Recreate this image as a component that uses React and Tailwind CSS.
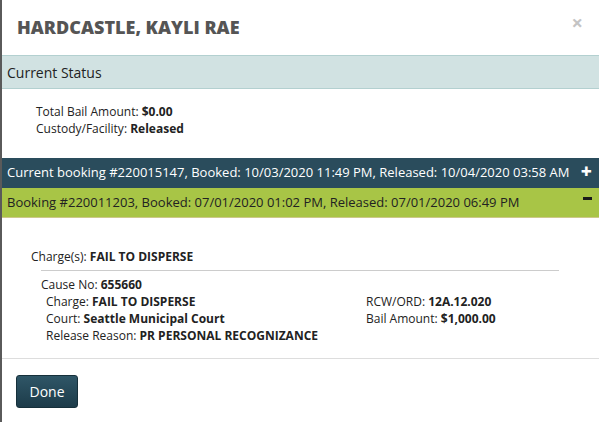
import React from 'react'

function Field({ label, value }) {
  return (
    <div>
      {label}: <span className="font-bold">{value}</span>
    </div>
  )
}

export default function App() {
  return (
    <div
      className="w-[599px] h-[422px] bg-white border-l-2 border-[#5a5a5a] overflow-hidden text-[#222]"
      style={{ fontFamily: '"Open Sans", "Liberation Sans", sans-serif' }}
    >
      {/* header */}
      <div className="h-[55px] flex items-center justify-between pl-[15px] pr-[16px]">
        <h1 className="text-[18px] font-extrabold text-[#555]">HARDCASTLE, KAYLI RAE</h1>
        <span className="text-[20px] font-bold text-[#c4c4c4] leading-none -mt-[10px]">×</span>
      </div>

      {/* current status */}
      <div className="h-[34px] flex items-center bg-[#d1e2e2] border-y border-[#b3d0d0] pl-[5px] text-[14px] text-[#222]">
        Current Status
      </div>
      <div className="pl-[34px] pt-[14px] text-[12px] leading-[17px]">
        <Field label="Total Bail Amount" value="$0.00" />
        <Field label="Custody/Facility" value="Released" />
      </div>

      {/* bookings */}
      <div className="mt-[21px]">
        <div className="h-[30px] flex items-center justify-between bg-[#2a4c5c] text-white text-[13px] pl-[5px] pr-[7px] whitespace-nowrap">
          <span>Current booking #220015147, Booked: 10/03/2020 11:49 PM, Released: 10/04/2020 03:58 AM</span>
          <span className="text-[19px] font-extrabold leading-none -mt-[4px]">+</span>
        </div>
        <div className="h-[30px] flex items-center justify-between bg-[#a8c546] border-b border-[#cdc88a] text-[#222] text-[13px] pl-[5px] pr-[7px] whitespace-nowrap">
          <span>Booking #220011203, Booked: 07/01/2020 01:02 PM, Released: 07/01/2020 06:49 PM</span>
          <span className="block w-[9px] h-[3px] bg-[#1a1a1a] -mt-[8px]" />
        </div>
      </div>

      {/* charges */}
      <div className="pl-[29px] pt-[30px] text-[12px] leading-[17px]">
        <Field label="Charge(s)" value="FAIL TO DISPERSE" />
        <div className="ml-[10px] mr-[40px] mt-[5px] border-t border-[#ccc]" />
        <div className="pl-[10px] pt-[5px]">
          <Field label="Cause No" value="655660" />
          <div className="pl-[5px] grid grid-cols-[320px_1fr]">
            <Field label="Charge" value="FAIL TO DISPERSE" />
            <Field label="RCW/ORD" value="12A.12.020" />
            <Field label="Court" value="Seattle Municipal Court" />
            <Field label="Bail Amount" value="$1,000.00" />
            <Field label="Release Reason" value="PR PERSONAL RECOGNIZANCE" />
          </div>
        </div>
      </div>

      {/* footer */}
      <div className="mt-[14px] border-t border-[#ddd] pt-[16px] pl-[14px]">
        <button className="h-[33px] w-[62px] rounded-[3px] border border-[#16303b] bg-gradient-to-b from-[#2f5667] to-[#1d3c4a] text-white text-[14px]">
          Done
        </button>
      </div>
    </div>
  )
}
